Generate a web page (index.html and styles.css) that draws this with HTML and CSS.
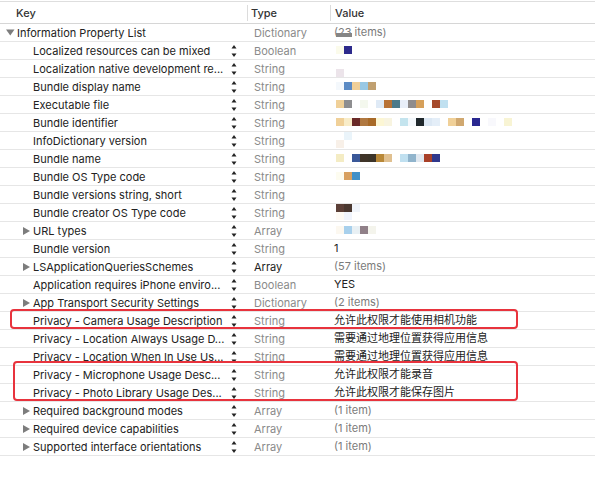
FILE: index.html
```html
<!DOCTYPE html>
<html>
<head>
<meta charset="utf-8">
<link rel="stylesheet" href="styles.css">
</head>
<body>
<div class="plist">
  <div class="head">
    <div class="hkey">Key</div>
    <div class="hcell htype">Type</div>
    <div class="hcell hval">Value</div>
  </div>

  <div class="row">
    <div class="key top"><span class="disc"><svg width="9" height="7" viewBox="0 0 9 7"><polygon points="0,0.5 8.5,0.5 4.25,6.5" fill="#7d7d7d"/></svg></span><span class="name">Information Property List</span></div>
    <div class="type">Dictionary</div>
    <div class="val dim blotted">(23 items)<span class="blot"></span></div>
  </div>

  <div class="row">
    <div class="key"><span class="disc"></span><span class="name">Localized resources can be mixed</span><svg class="step" viewBox="0 0 6 17"><polygon points="0.5,6.5 3,3 5.5,6.5" fill="#222"/><polygon points="0.5,11.5 5.5,11.5 3,15" fill="#222"/></svg></div>
    <div class="type">Boolean</div>
    <div class="val"><div class="mosaic"><div class="mrow"><i class="px" style="background:#fbfbeb"></i><i class="px" style="background:#2d2a8c"></i></div></div></div>
  </div>

  <div class="row">
    <div class="key"><span class="disc"></span><span class="name">Localization native development re...</span><svg class="step" viewBox="0 0 6 17"><polygon points="0.5,6.5 3,3 5.5,6.5" fill="#222"/><polygon points="0.5,11.5 5.5,11.5 3,15" fill="#222"/></svg></div>
    <div class="type">String</div>
    <div class="val"><div class="mosaic low"><div class="mrow"><i class="px" style="background:#ece4ea"></i></div></div></div>
  </div>

  <div class="row">
    <div class="key"><span class="disc"></span><span class="name">Bundle display name</span><svg class="step" viewBox="0 0 6 17"><polygon points="0.5,6.5 3,3 5.5,6.5" fill="#222"/><polygon points="0.5,11.5 5.5,11.5 3,15" fill="#222"/></svg></div>
    <div class="type">String</div>
    <div class="val"><div class="mosaic"><div class="mrow"><i class="px" style="background:#f4f8fc"></i><i class="px" style="background:#5b8ac4"></i><i class="px" style="background:#f0cf98"></i><i class="px" style="background:#98c8e4"></i><i class="px" style="background:#c0a070"></i></div></div></div>
  </div>

  <div class="row">
    <div class="key"><span class="disc"></span><span class="name">Executable file</span><svg class="step" viewBox="0 0 6 17"><polygon points="0.5,6.5 3,3 5.5,6.5" fill="#222"/><polygon points="0.5,11.5 5.5,11.5 3,15" fill="#222"/></svg></div>
    <div class="type">String</div>
    <div class="val"><div class="mosaic"><div class="mrow"><i class="px" style="background:#f0d098"></i><i class="px" style="background:#8e8e90"></i><i class="px" style="background:#ffffff"></i><i class="px" style="background:#f4f8ee"></i><i class="px" style="background:#ffffff"></i><i class="px" style="background:#dfeaf6"></i><i class="px" style="background:#b87236"></i><i class="px" style="background:#4b7a8a"></i><i class="px" style="background:#e8eef8"></i><i class="px" style="background:#908c8c"></i><i class="px" style="background:#d6a05a"></i><i class="px" style="background:#ffffff"></i><i class="px" style="background:#a64a2c"></i><i class="px" style="background:#c0e0f0"></i></div></div></div>
  </div>

  <div class="row">
    <div class="key"><span class="disc"></span><span class="name">Bundle identifier</span><svg class="step" viewBox="0 0 6 17"><polygon points="0.5,6.5 3,3 5.5,6.5" fill="#222"/><polygon points="0.5,11.5 5.5,11.5 3,15" fill="#222"/></svg></div>
    <div class="type">String</div>
    <div class="val"><div class="mosaic"><div class="mrow"><i class="px" style="background:#f0d098"></i><i class="px" style="background:#f8ecc8"></i><i class="px" style="background:#6a2a28"></i><i class="px" style="background:#b07840"></i><i class="px" style="background:#a86a28"></i><i class="px" style="background:#fcf6d4"></i><i class="px" style="background:#f8f4e0"></i><i class="px" style="background:#ffffff"></i><i class="px" style="background:#c4e4ee"></i><i class="px" style="background:#f4f8fc"></i><i class="px" style="background:#20282c"></i><i class="px" style="background:#dce8f4"></i><i class="px" style="background:#e4eef8"></i><i class="px" style="background:#ffffff"></i><i class="px" style="background:#f0d098"></i><i class="px" style="background:#d0a870"></i><i class="px" style="background:#ffffff"></i><i class="px" style="background:#2a2890"></i><i class="px" style="background:#ffffff"></i><i class="px" style="background:#f8f8fc"></i><i class="px" style="background:#ffffff"></i><i class="px" style="background:#f8f4d4"></i></div></div></div>
  </div>

  <div class="row">
    <div class="key"><span class="disc"></span><span class="name">InfoDictionary version</span><svg class="step" viewBox="0 0 6 17"><polygon points="0.5,6.5 3,3 5.5,6.5" fill="#222"/><polygon points="0.5,11.5 5.5,11.5 3,15" fill="#222"/></svg></div>
    <div class="type">String</div>
    <div class="val"><div class="mosaic"><div class="mrow"><i class="px"></i><i class="px" style="background:#eaf4fa"></i></div><div class="mrow"><i class="px" style="background:#f8f0e8"></i></div></div></div>
  </div>

  <div class="row">
    <div class="key"><span class="disc"></span><span class="name">Bundle name</span><svg class="step" viewBox="0 0 6 17"><polygon points="0.5,6.5 3,3 5.5,6.5" fill="#222"/><polygon points="0.5,11.5 5.5,11.5 3,15" fill="#222"/></svg></div>
    <div class="type">String</div>
    <div class="val"><div class="mosaic"><div class="mrow"><i class="px" style="background:#f4ecc4"></i><i class="px" style="background:#ffffff"></i><i class="px" style="background:#3a5898"></i><i class="px" style="background:#403428"></i><i class="px" style="background:#3c3428"></i><i class="px" style="background:#b88838"></i><i class="px" style="background:#e0c090"></i><i class="px" style="background:#ffffff"></i><i class="px" style="background:#c0e0f0"></i><i class="px" style="background:#90b4cc"></i><i class="px" style="background:#e0e8f0"></i><i class="px" style="background:#a84028"></i><i class="px" style="background:#30388c"></i></div></div></div>
  </div>

  <div class="row">
    <div class="key"><span class="disc"></span><span class="name">Bundle OS Type code</span><svg class="step" viewBox="0 0 6 17"><polygon points="0.5,6.5 3,3 5.5,6.5" fill="#222"/><polygon points="0.5,11.5 5.5,11.5 3,15" fill="#222"/></svg></div>
    <div class="type">String</div>
    <div class="val"><div class="mosaic"><div class="mrow"><i class="px" style="background:#fdfcf0"></i><i class="px" style="background:#d8a060"></i><i class="px" style="background:#4090c8"></i></div></div></div>
  </div>

  <div class="row">
    <div class="key"><span class="disc"></span><span class="name">Bundle versions string, short</span><svg class="step" viewBox="0 0 6 17"><polygon points="0.5,6.5 3,3 5.5,6.5" fill="#222"/><polygon points="0.5,11.5 5.5,11.5 3,15" fill="#222"/></svg></div>
    <div class="type">String</div>
    <div class="val"></div>
  </div>

  <div class="row">
    <div class="key"><span class="disc"></span><span class="name">Bundle creator OS Type code</span><svg class="step" viewBox="0 0 6 17"><polygon points="0.5,6.5 3,3 5.5,6.5" fill="#222"/><polygon points="0.5,11.5 5.5,11.5 3,15" fill="#222"/></svg></div>
    <div class="type">String</div>
    <div class="val"><div class="mosaic"><div class="mrow"><i class="px" style="background:#5c4038"></i><i class="px" style="background:#4a3830"></i><i class="px" style="background:#f0f4fa"></i></div><div class="mrow"><i class="px" style="background:#fefaf4"></i><i class="px" style="background:#f0f4fc"></i></div></div></div>
  </div>

  <div class="row">
    <div class="key"><span class="disc"><svg width="7" height="8" viewBox="0 0 7 8"><polygon points="0,0 7,4 0,8" fill="#7d7d7d"/></svg></span><span class="name">URL types</span><svg class="step" viewBox="0 0 6 17"><polygon points="0.5,6.5 3,3 5.5,6.5" fill="#222"/><polygon points="0.5,11.5 5.5,11.5 3,15" fill="#222"/></svg></div>
    <div class="type">Array</div>
    <div class="val"><div class="mosaic"><div class="mrow"><i class="px" style="background:#fcf8f0"></i><i class="px" style="background:#a8d0ec"></i><i class="px" style="background:#e8f0f4"></i><i class="px" style="background:#908088"></i><i class="px" style="background:#f4f4ec"></i></div></div></div>
  </div>

  <div class="row">
    <div class="key"><span class="disc"></span><span class="name">Bundle version</span><svg class="step" viewBox="0 0 6 17"><polygon points="0.5,6.5 3,3 5.5,6.5" fill="#222"/><polygon points="0.5,11.5 5.5,11.5 3,15" fill="#222"/></svg></div>
    <div class="type">String</div>
    <div class="val">1</div>
  </div>

  <div class="row">
    <div class="key"><span class="disc"><svg width="7" height="8" viewBox="0 0 7 8"><polygon points="0,0 7,4 0,8" fill="#7d7d7d"/></svg></span><span class="name">LSApplicationQueriesSchemes</span><svg class="step" viewBox="0 0 6 17"><polygon points="0.5,6.5 3,3 5.5,6.5" fill="#222"/><polygon points="0.5,11.5 5.5,11.5 3,15" fill="#222"/></svg></div>
    <div class="type strong">Array</div>
    <div class="val dim">(57 items)</div>
  </div>

  <div class="row">
    <div class="key"><span class="disc"></span><span class="name">Application requires iPhone enviro...</span><svg class="step" viewBox="0 0 6 17"><polygon points="0.5,6.5 3,3 5.5,6.5" fill="#222"/><polygon points="0.5,11.5 5.5,11.5 3,15" fill="#222"/></svg></div>
    <div class="type">Boolean</div>
    <div class="val">YES</div>
  </div>

  <div class="row">
    <div class="key"><span class="disc"><svg width="7" height="8" viewBox="0 0 7 8"><polygon points="0,0 7,4 0,8" fill="#7d7d7d"/></svg></span><span class="name">App Transport Security Settings</span><svg class="step" viewBox="0 0 6 17"><polygon points="0.5,6.5 3,3 5.5,6.5" fill="#222"/><polygon points="0.5,11.5 5.5,11.5 3,15" fill="#222"/></svg></div>
    <div class="type">Dictionary</div>
    <div class="val dim">(2 items)</div>
  </div>

  <div class="row">
    <div class="key"><span class="disc"></span><span class="name">Privacy - Camera Usage Description</span><svg class="step" viewBox="0 0 6 17"><polygon points="0.5,6.5 3,3 5.5,6.5" fill="#222"/><polygon points="0.5,11.5 5.5,11.5 3,15" fill="#222"/></svg></div>
    <div class="type">String</div>
    <div class="val">允许此权限才能使用相机功能</div>
  </div>

  <div class="row">
    <div class="key"><span class="disc"></span><span class="name">Privacy - Location Always Usage D...</span><svg class="step" viewBox="0 0 6 17"><polygon points="0.5,6.5 3,3 5.5,6.5" fill="#222"/><polygon points="0.5,11.5 5.5,11.5 3,15" fill="#222"/></svg></div>
    <div class="type">String</div>
    <div class="val">需要通过地理位置获得应用信息</div>
  </div>

  <div class="row">
    <div class="key"><span class="disc"></span><span class="name">Privacy - Location When In Use Us...</span><svg class="step" viewBox="0 0 6 17"><polygon points="0.5,6.5 3,3 5.5,6.5" fill="#222"/><polygon points="0.5,11.5 5.5,11.5 3,15" fill="#222"/></svg></div>
    <div class="type">String</div>
    <div class="val">需要通过地理位置获得应用信息</div>
  </div>

  <div class="row">
    <div class="key"><span class="disc"></span><span class="name">Privacy - Microphone Usage Desc...</span><svg class="step" viewBox="0 0 6 17"><polygon points="0.5,6.5 3,3 5.5,6.5" fill="#222"/><polygon points="0.5,11.5 5.5,11.5 3,15" fill="#222"/></svg></div>
    <div class="type">String</div>
    <div class="val">允许此权限才能录音</div>
  </div>

  <div class="row">
    <div class="key"><span class="disc"></span><span class="name">Privacy - Photo Library Usage Des...</span><svg class="step" viewBox="0 0 6 17"><polygon points="0.5,6.5 3,3 5.5,6.5" fill="#222"/><polygon points="0.5,11.5 5.5,11.5 3,15" fill="#222"/></svg></div>
    <div class="type">String</div>
    <div class="val">允许此权限才能保存图片</div>
  </div>

  <div class="row">
    <div class="key"><span class="disc"><svg width="7" height="8" viewBox="0 0 7 8"><polygon points="0,0 7,4 0,8" fill="#7d7d7d"/></svg></span><span class="name">Required background modes</span><svg class="step" viewBox="0 0 6 17"><polygon points="0.5,6.5 3,3 5.5,6.5" fill="#222"/><polygon points="0.5,11.5 5.5,11.5 3,15" fill="#222"/></svg></div>
    <div class="type">Array</div>
    <div class="val dim">(1 item)</div>
  </div>

  <div class="row">
    <div class="key"><span class="disc"><svg width="7" height="8" viewBox="0 0 7 8"><polygon points="0,0 7,4 0,8" fill="#7d7d7d"/></svg></span><span class="name">Required device capabilities</span><svg class="step" viewBox="0 0 6 17"><polygon points="0.5,6.5 3,3 5.5,6.5" fill="#222"/><polygon points="0.5,11.5 5.5,11.5 3,15" fill="#222"/></svg></div>
    <div class="type">Array</div>
    <div class="val dim">(1 item)</div>
  </div>

  <div class="row">
    <div class="key"><span class="disc"><svg width="7" height="8" viewBox="0 0 7 8"><polygon points="0,0 7,4 0,8" fill="#7d7d7d"/></svg></span><span class="name">Supported interface orientations</span><svg class="step" viewBox="0 0 6 17"><polygon points="0.5,6.5 3,3 5.5,6.5" fill="#222"/><polygon points="0.5,11.5 5.5,11.5 3,15" fill="#222"/></svg></div>
    <div class="type">Array</div>
    <div class="val dim">(1 item)</div>
  </div>

  <div class="mark m1"></div>
  <div class="mark m2"></div>
</div>
</body>
</html>
```

FILE: styles.css
```css
* { box-sizing: border-box; }
body {
  margin: 0;
  background: #fff;
  font-family: Inter, "Noto Sans CJK SC", sans-serif;
  font-size: 11px;
  color: #222;
}
.plist {
  position: relative;
  padding-top: 1px;
}
.head {
  display: grid;
  grid-template-columns: 247px 83px 1fr;
  height: 23px;
  border-top: 1px solid #dedede;
  border-bottom: 1px solid #d6d6d6;
  align-items: center;
  color: #333;
  font-weight: 500;
}
.hkey { padding-left: 16px; }
.hcell {
  height: 16px;
  line-height: 16px;
  border-left: 1px solid #dcdcdc;
}
.htype { padding-left: 3px; }
.hval { padding-left: 4px; }
.row {
  display: grid;
  grid-template-columns: 247px 83px 1fr;
  height: 18px;
  border-bottom: 1px solid #e6e6e6;
  align-items: center;
}
.key {
  display: flex;
  align-items: center;
  height: 17px;
  padding-left: 23px;
  min-width: 0;
}
.key.top { padding-left: 6px; }
.disc {
  width: 10px;
  flex: none;
  display: flex;
  align-items: center;
}
.top .disc { width: 11px; }
.name {
  flex: 1;
  min-width: 0;
  overflow: hidden;
  white-space: nowrap;
  text-overflow: ellipsis;
}
.step {
  width: 6px;
  height: 17px;
  flex: none;
  margin: 0 10px 0 5px;
}
.type {
  padding-left: 7px;
  color: #8a8a8a;
  white-space: nowrap;
}
.type.strong { color: #222; }
.val {
  padding-left: 4px;
  white-space: nowrap;
  height: 17px;
  line-height: 17px;
  display: flex;
  align-items: center;
}
.val.dim { color: #7b7b7b; }
.blotted { position: relative; }
.blot {
  position: absolute;
  left: 6px;
  top: 9px;
  width: 16px;
  height: 4px;
  background: #858585;
}
.mosaic {
  display: flex;
  flex-direction: column;
  margin-left: 2px;
  margin-top: -1px;
}
.mosaic.low { margin-top: 9px; }
.mrow { display: flex; }
.px {
  display: block;
  width: 8px;
  height: 8px;
}
.mark {
  position: absolute;
  border: 2px solid #e8333d;
  border-radius: 4px;
}
.m1 { left: 10px; top: 309px; width: 508px; height: 20px; }
.m2 { left: 13px; top: 361px; width: 505px; height: 40px; }
```
